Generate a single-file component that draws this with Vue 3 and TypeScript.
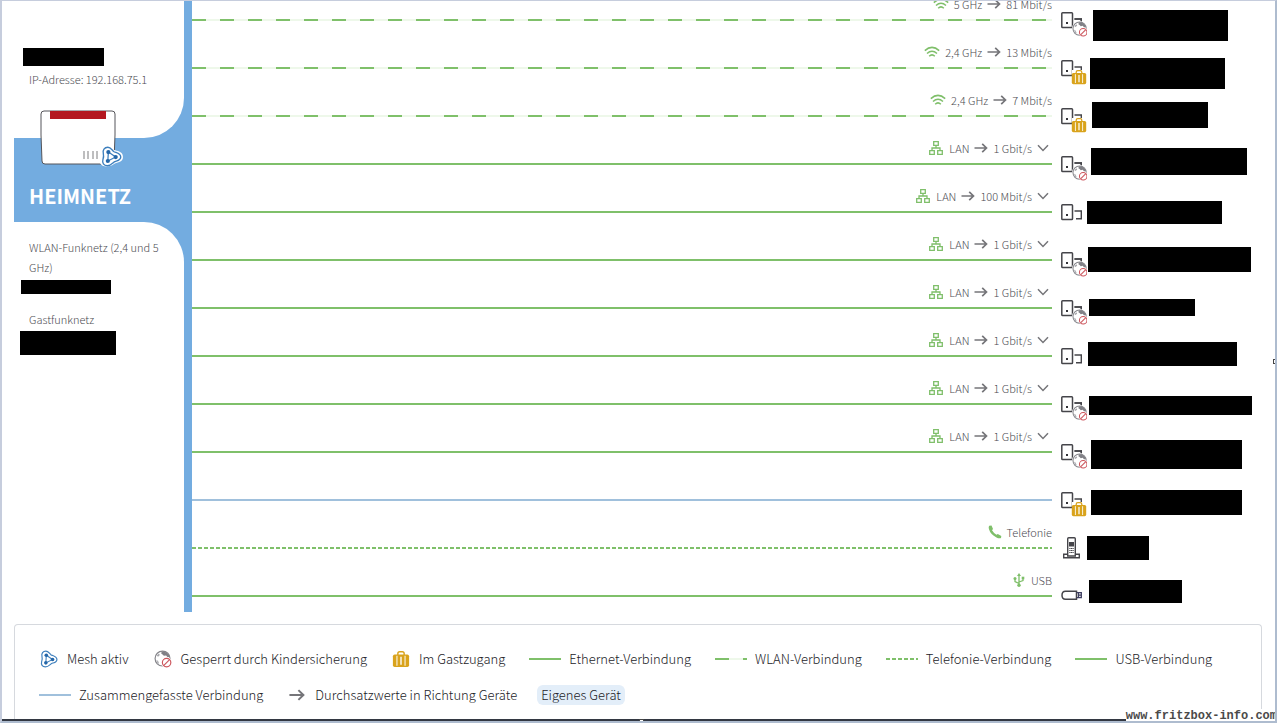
<script setup lang="ts">
type Kind = 'wifi' | 'lan' | 'group' | 'phone' | 'usb'
type Badge = 'blocked' | 'guest' | 'none'

interface Mask {
  left: number
  top: number
  width: number
  height: number
}

interface Connection {
  kind: Kind
  medium: string
  rate?: string
  badge: Badge
  mask: Mask
}

const mask = (left: number, top: number, width: number, height: number): Mask => ({ left, top, width, height })

const connections: Connection[] = [
  { kind: 'wifi', medium: '5 GHz', rate: '81 Mbit/s', badge: 'blocked', mask: mask(41, 22, 135, 31) },
  { kind: 'wifi', medium: '2,4 GHz', rate: '13 Mbit/s', badge: 'guest', mask: mask(38, 22, 135, 31) },
  { kind: 'wifi', medium: '2,4 GHz', rate: '7 Mbit/s', badge: 'guest', mask: mask(40, 18, 116, 26) },
  { kind: 'lan', medium: 'LAN', rate: '1 Gbit/s', badge: 'blocked', mask: mask(39, 16, 156, 27) },
  { kind: 'lan', medium: 'LAN', rate: '100 Mbit/s', badge: 'none', mask: mask(35, 21, 135, 23) },
  { kind: 'lan', medium: 'LAN', rate: '1 Gbit/s', badge: 'blocked', mask: mask(36, 19, 163, 25) },
  { kind: 'lan', medium: 'LAN', rate: '1 Gbit/s', badge: 'blocked', mask: mask(37, 23, 106, 17) },
  { kind: 'lan', medium: 'LAN', rate: '1 Gbit/s', badge: 'none', mask: mask(36, 18, 149, 24) },
  { kind: 'lan', medium: 'LAN', rate: '1 Gbit/s', badge: 'blocked', mask: mask(37, 24, 163, 19) },
  { kind: 'lan', medium: 'LAN', rate: '1 Gbit/s', badge: 'blocked', mask: mask(39, 20, 151, 29) },
  { kind: 'group', medium: '', badge: 'guest', mask: mask(39, 22, 151, 25) },
  { kind: 'phone', medium: 'Telefonie', badge: 'none', mask: mask(35, 20, 62, 24) },
  { kind: 'usb', medium: 'USB', badge: 'none', mask: mask(37, 16, 93, 23) },
]

type Symbol = 'mesh' | 'blocked' | 'guest' | 'arrow' | 'line-lan' | 'line-wifi' | 'line-phone' | 'line-usb' | 'line-group'

const legend: { symbol: Symbol; text: string }[] = [
  { symbol: 'mesh', text: 'Mesh aktiv' },
  { symbol: 'blocked', text: 'Gesperrt durch Kindersicherung' },
  { symbol: 'guest', text: 'Im Gastzugang' },
  { symbol: 'line-lan', text: 'Ethernet-Verbindung' },
  { symbol: 'line-wifi', text: 'WLAN-Verbindung' },
  { symbol: 'line-phone', text: 'Telefonie-Verbindung' },
  { symbol: 'line-usb', text: 'USB-Verbindung' },
  { symbol: 'line-group', text: 'Zusammengefasste Verbindung' },
  { symbol: 'arrow', text: 'Durchsatzwerte in Richtung Geräte' },
]

const box = (m: Mask) => ({
  left: `${m.left}px`,
  top: `${m.top}px`,
  width: `${m.width}px`,
  height: `${m.height}px`,
})
</script>

<template>
  <div class="page">
    <svg class="defs" width="0" height="0" aria-hidden="true">
      <symbol id="i-mesh" viewBox="0 0 20 20">
        <path d="M6.500 1.200C9.200 1.200 10 3.400 12 5.200C14 6.500 18.800 6.800 18.800 10.500C18.800 14 15.200 14 12.500 15.200C10.500 16.800 9 18.800 6 18.800C2.500 18.800 1 16 1.800 13.200C2.600 10.800 2.800 9.500 2.200 7C1.400 4 3.200 1.200 6.500 1.200Z" fill="#fff" stroke="#3d7fbd" stroke-width="1.300" />
        <path d="M7 5.800L14 10.500L6.500 14.300Z" fill="none" stroke="#3d7fbd" stroke-width="1.200" />
        <circle cx="7" cy="5.800" r="2" fill="#2466a8" />
        <circle cx="14" cy="10.500" r="2" fill="#2466a8" />
        <circle cx="6.500" cy="14.300" r="2" fill="#2466a8" />
      </symbol>
      <symbol id="i-blocked" viewBox="0 0 20 20">
        <circle cx="9.500" cy="9.500" r="8.300" fill="#fff" stroke="#85858a" stroke-width="1.300" />
        <path d="M8.500 2C11 0.800 16 3 17.500 7.500L15 8L13.500 6L11 6.500L9.500 5L8 4Z" fill="#808086" />
        <path d="M3 6.500L5.500 4L6.500 5.500L4.500 7.500Z" fill="#a5a5aa" />
        <path d="M2.500 11L4.500 12L5.500 14.500L5 15.500L3.500 14Z" fill="#b0b0b5" />
        <circle cx="14" cy="14" r="6" fill="#fff" />
        <circle cx="14" cy="14" r="4.700" fill="#fff" stroke="#cc555c" stroke-width="1.300" />
        <path d="M10.700 17.300L17.300 10.700" stroke="#cc555c" stroke-width="1.300" />
      </symbol>
      <symbol id="i-guest" viewBox="0 0 20 20">
        <path d="M6.500 6V4Q6.500 2 8.500 2H11.500Q13.500 2 13.500 4V6" fill="none" stroke="#d9a31c" stroke-width="1.600" />
        <rect x="1" y="5" width="18" height="14" rx="2" fill="#d9a31c" />
        <path d="M5.500 6.500V17.500M14.500 6.500V17.500" stroke="#fff" stroke-width="1.200" opacity="0.900" />
        <path d="M10 7.500V16.500" stroke="#fff" stroke-width="1.800" opacity="0.850" />
      </symbol>
      <symbol id="i-arrow" viewBox="0 0 14 12">
        <path d="M0.500 6H12.500M8.200 1.800L12.500 6L8.200 10.200" fill="none" stroke="#757579" stroke-width="1.700" />
      </symbol>
      <symbol id="i-wifi" viewBox="0 0 16 12">
        <path d="M0.800 4.600Q8 -1.800 15.200 4.600M3 7.500Q8 3 13 7.500M5.200 10.200Q8 7.500 10.800 10.200" fill="none" stroke="#7fbf6a" stroke-width="1.500" />
      </symbol>
      <symbol id="i-lan" viewBox="0 0 16 16">
        <path d="M5.700 1.700H10.300V5.300H5.700ZM1.700 10.700H6.300V14.300H1.700ZM9.700 10.700H14.300V14.300H9.700ZM8 5.300V8M4 10.700V8H12V10.700" fill="none" stroke="#7fbf6a" stroke-width="1.300" />
      </symbol>
      <symbol id="i-phone" viewBox="0 0 14 14">
        <path d="M1.200 0.800L3.500 0.600L5 4L4 5.300Q5.500 8 8.500 9.800L9.800 9L13.300 11L13 12.900Q11.500 14 8.500 12.500Q2.500 9.500 0.900 4Q0.300 1.800 1.200 0.800Z" fill="#7fbf6a" />
      </symbol>
      <symbol id="i-usb" viewBox="0 0 12 14">
        <path d="M6 2V12M6 10.500L2 8.500V6M6 9L10 7.500V5" fill="none" stroke="#7fbf6a" stroke-width="1.300" />
        <path d="M6 0L8 3H4Z" fill="#7fbf6a" />
        <circle cx="6" cy="12.200" r="1.700" fill="#7fbf6a" />
        <circle cx="2" cy="5.500" r="1.500" fill="#7fbf6a" />
        <rect x="8.700" y="3.700" width="2.600" height="2.600" fill="#7fbf6a" />
      </symbol>
    </svg>

    <main class="map">
      <aside class="sidebar">
        <section class="panel upper">
          <p>IP-Adresse: 192.168.75.1</p>
          <span class="mask box-name"></span>
        </section>
        <header class="band">
          <svg class="router" viewBox="0 0 84 58" aria-hidden="true">
            <path d="M4 1H72Q75 1 75 4V25L74 51Q74 54 71 54H5Q2 54 2 51L1 25V4Q1 1 4 1Z" fill="#fff" stroke="#55555a" stroke-width="1" />
            <rect x="10" y="1" width="56" height="8" fill="#b41820" />
            <path d="M44 41V49M48 41V49M53 41V49M57 41V49" stroke="#a9a9ab" stroke-width="1.500" />
            <path d="M66 35C70 35 71 38 74 40C77 41 83 41 83 47C83 52 78 52 74 54C71 57 62 58 60 53C59 50 61 48 60 43C59 38 61 35 66 35Z" fill="#fff" />
            <use href="#i-mesh" x="61" y="36" width="21" height="21" />
          </svg>
          <h1>HEIMNETZ</h1>
        </header>
        <section class="panel lower">
          <p>WLAN-Funknetz (2,4 und 5 GHz)</p>
          <span class="mask wlan-name"></span>
          <p class="guest-net">Gastfunknetz</p>
          <span class="mask guest-name"></span>
        </section>
      </aside>

      <ul class="connections">
        <li v-for="(c, i) in connections" :key="i" class="row">
          <div class="link">
            <div class="label">
              <svg v-if="c.kind === 'wifi'" class="ic-wifi"><use href="#i-wifi" /></svg>
              <svg v-else-if="c.kind === 'lan'" class="ic-lan"><use href="#i-lan" /></svg>
              <svg v-else-if="c.kind === 'phone'" class="ic-phone"><use href="#i-phone" /></svg>
              <svg v-else-if="c.kind === 'usb'" class="ic-usb"><use href="#i-usb" /></svg>
              <span>{{ c.medium }}</span>
              <template v-if="c.rate">
                <svg class="ic-arrow"><use href="#i-arrow" /></svg>
                <span>{{ c.rate }}</span>
              </template>
              <button v-if="c.kind === 'lan'" type="button" class="toggle" aria-label="Details anzeigen">
                <svg viewBox="0 0 12 8"><path d="M1 1.200L6 6.400L11 1.200" fill="none" stroke="#757579" stroke-width="1.500" /></svg>
              </button>
            </div>
            <div class="line" :class="'line-' + c.kind"></div>
          </div>
          <div class="device">
            <svg v-if="c.kind === 'phone'" class="ic-device" viewBox="0 -4 26 30">
              <path d="M6.700 12V-1.300Q6.700 -2.300 7.700 -2.300H13.300Q14.300 -2.300 14.300 -1.300V12" fill="#fff" stroke="#45454a" stroke-width="1.400" />
              <path d="M6.700 12V16H14.300V12" fill="#fff" stroke="#45454a" stroke-width="1.400" />
              <rect x="8" y="2" width="5" height="4.500" fill="#45454a" />
              <path d="M8.300 8.500H12.700M8.300 10.500H12.700M8.300 12.500H12.700" stroke="#45454a" stroke-width="1.200" stroke-dasharray="1.200 0.400" />
              <path d="M6.500 14.200H2.700V17.800H18.300V14.200H14.500" fill="none" stroke="#45454a" stroke-width="1.400" />
            </svg>
            <svg v-else-if="c.kind === 'usb'" class="ic-device" viewBox="0 -4 26 30">
              <path d="M15.500 3.200H4.500Q1 3.200 1 7.200Q1 11.200 4.500 11.200H15.500Z" fill="#fff" stroke="#45454a" stroke-width="1.500" />
              <path d="M15.500 4.700H20.300V9.700H15.500M17 7.200H20M17.500 5V9.500" fill="none" stroke="#3d3d60" stroke-width="1.300" />
            </svg>
            <svg v-else class="ic-device" viewBox="0 -4 26 30">
              <rect x="0.800" y="0.800" width="10.700" height="14.700" rx="0.800" fill="#fff" stroke="#45454a" stroke-width="1.500" />
              <rect x="5" y="10" width="2" height="2" fill="#333338" />
              <path d="M13.500 7H20.300V14.800H15" fill="none" stroke="#45454a" stroke-width="1.400" />
              <template v-if="c.badge === 'blocked'">
                <circle cx="18.500" cy="16.500" r="7.500" fill="#fff" />
                <use href="#i-blocked" x="11" y="9" width="16" height="16" />
                <path d="M13.500 7H20.300V9" fill="none" stroke="#45454a" stroke-width="1.400" />
              </template>
              <template v-if="c.badge === 'guest'">
                <rect x="11" y="10" width="15" height="15" fill="#fff" />
                <use href="#i-guest" x="10" y="9" width="16" height="16" />
              </template>
            </svg>
            <span class="mask" :style="box(c.mask)"></span>
          </div>
        </li>
      </ul>
    </main>

    <section class="legend">
      <ul>
        <li v-for="item in legend" :key="item.text">
          <span v-if="item.symbol.startsWith('line')" class="line sample" :class="item.symbol"></span>
          <svg v-else class="symbol" :class="'symbol-' + item.symbol"><use :href="'#i-' + item.symbol" /></svg>
          <span>{{ item.text }}</span>
        </li>
        <li><mark>Eigenes Gerät</mark></li>
      </ul>
    </section>

    <i class="handle handle-right"></i>
    <i class="handle handle-bottom"></i>
    <footer class="watermark">www.fritzbox-info.com</footer>
  </div>
</template>

<style>
body {
  margin: 0;
  background: #fff;
}
</style>

<style scoped>
.page {
  position: relative;
  box-sizing: border-box;
  height: 100vh;
  display: flex;
  flex-direction: column;
  overflow: hidden;
  border: 2px solid #c6cddd;
  border-top-width: 1px;
  border-right-color: #aebccf;
  border-bottom-color: #aebccf;
  background: #fff;
  color: #4c4c52;
  font: 300 11px/20px "Noto Sans CJK SC", "Open Sans", sans-serif;
}
.defs {
  position: absolute;
}
p,
h1,
ul {
  margin: 0;
  padding: 0;
}
ul {
  list-style: none;
}
.mask {
  position: absolute;
  background: #000;
}
.map {
  flex: none;
  display: flex;
  overflow: hidden;
  margin-left: 12px;
}
.sidebar {
  flex: none;
  display: flex;
  flex-direction: column;
  width: 170px;
  padding-right: 8px;
  background: #73ace0;
}
.panel {
  position: relative;
  background: #fff;
  padding: 0 8px 0 15px;
}
.upper {
  height: 69px;
  padding-top: 68px;
  border-bottom-right-radius: 40px;
}
.lower {
  flex: 1;
  padding-top: 15px;
  border-top-right-radius: 40px;
}
.guest-net {
  margin-top: 32px;
}
.box-name {
  left: 9px;
  top: 47px;
  width: 81px;
  height: 18px;
}
.wlan-name {
  left: 7px;
  top: 58px;
  width: 90px;
  height: 14px;
}
.guest-name {
  left: 6px;
  top: 109px;
  width: 96px;
  height: 24px;
}
.band {
  position: relative;
  box-sizing: border-box;
  height: 84px;
  padding: 44px 0 0 15px;
}
.band h1 {
  color: #fff;
  font-size: 20px;
  line-height: 28px;
  font-weight: 700;
}
.router {
  position: absolute;
  left: 26px;
  top: -28px;
  width: 84px;
  height: 58px;
}
.connections {
  flex: 1;
  margin-top: -13px;
}
.row {
  display: flex;
  height: 48px;
}
.link {
  flex: 1;
}
.label {
  display: flex;
  align-items: center;
  justify-content: flex-end;
  gap: 5px;
  height: 20px;
  padding: 6px 0 5px;
}
.label svg {
  flex: none;
}
.ic-wifi {
  width: 16px;
  height: 12px;
}
.ic-lan {
  width: 16px;
  height: 16px;
}
.ic-phone,
.ic-usb {
  width: 14px;
  height: 14px;
}
.ic-arrow {
  width: 14px;
  height: 12px;
}
.toggle {
  display: flex;
  padding: 0 3px 0 0;
  border: 0;
  background: none;
}
.toggle svg {
  width: 12px;
  height: 8px;
}
.line {
  height: 2px;
  background: #7fc06a;
}
.line-wifi {
  background: repeating-linear-gradient(90deg, #7fc06a 0 14px, #eef8ea 14px 28px);
}
.line-phone {
  background: repeating-linear-gradient(90deg, #7fc06a 0 4px, #fff 4px 6px);
}
.line-group {
  background: #a0c0dc;
}
.device {
  position: relative;
  flex: none;
  box-sizing: border-box;
  width: 223px;
  padding: 20px 0 0 9px;
}
.ic-device {
  display: block;
  width: 26px;
  height: 30px;
}
.legend {
  flex: 1;
  margin: 12px 13px 0 12px;
  padding: 24px 23px 0 24px;
  border: 1px solid #d6d9de;
  border-bottom: 0;
  border-radius: 4px 4px 0 0;
  color: #222227;
  font-size: 13px;
}
.legend::after {
  content: "";
  position: absolute;
  left: 0;
  right: 0;
  bottom: 0;
  height: 2px;
  background: #333842;
}
.legend ul {
  display: flex;
  flex-wrap: wrap;
  gap: 16px 24px;
}
.legend li {
  display: flex;
  align-items: center;
  gap: 8px;
}
.sample {
  width: 32px;
}
.symbol {
  width: 20px;
  height: 18px;
}
.symbol-arrow {
  height: 14px;
}
mark {
  margin: 0 -4px;
  padding: 0 4px;
  border-radius: 6px;
  background: #e3eef9;
  color: inherit;
}
.handle {
  position: absolute;
  box-sizing: border-box;
  width: 5px;
  height: 5px;
  border: 1px solid #444;
  background: #fff;
}
.handle-right {
  right: -3px;
  top: 358px;
}
.handle-bottom {
  left: 50%;
  bottom: -3px;
}
.watermark {
  position: absolute;
  right: -2px;
  bottom: -2px;
  background: #fff;
  color: #4a4a4a;
  font: bold 12px/14px "Liberation Mono", monospace;
}
</style>
